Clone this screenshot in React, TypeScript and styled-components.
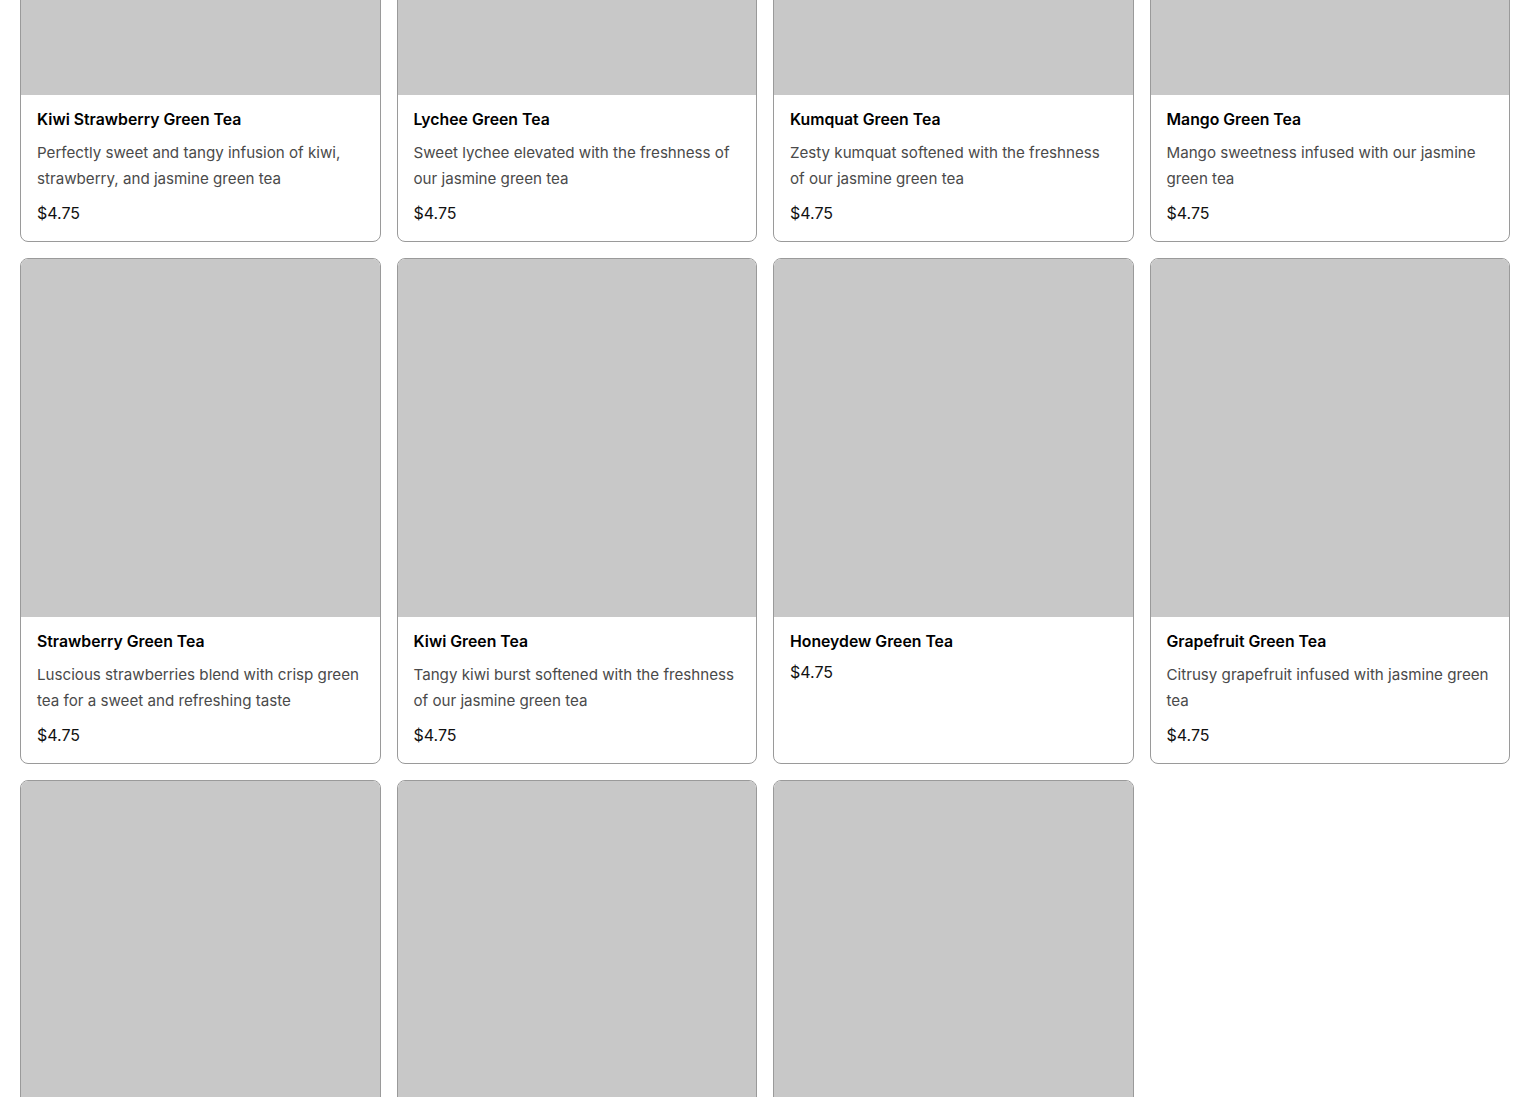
import React from "react";
import styled, { createGlobalStyle } from "styled-components";

const GlobalStyle = createGlobalStyle`
  html, body {
    margin: 0;
    padding: 0;
    background: #ffffff;
    font-family: Inter, "Noto Sans", "Liberation Sans", sans-serif;
  }
  * { box-sizing: border-box; }
`;

const Page = styled.main`
  padding: 0 20px 20px;
  margin-top: -265px;
`;

const Grid = styled.div`
  display: grid;
  grid-template-columns: repeat(4, 1fr);
  gap: 16px;
`;

const Card = styled.article`
  display: flex;
  flex-direction: column;
  border: 1px solid #9a9a9a;
  border-radius: 8px;
  overflow: hidden;
  background: #ffffff;
`;

const Thumb = styled.div`
  width: 100%;
  aspect-ratio: 1 / 1;
  background: #c8c8c8;
`;

const Body = styled.div`
  padding: 13px 16px 16px;
  display: flex;
  flex-direction: column;
`;

const Title = styled.h3`
  margin: 0 0 6px;
  font-size: 15.8px;
  line-height: 24px;
  font-weight: 600;
  color: #000000;
`;

const Description = styled.p`
  margin: 2px 0 9px;
  font-size: 15.15px;
  line-height: 26px;
  font-weight: 400;
  color: #4a4a4a;
`;

const Price = styled.span`
  font-size: 16px;
  line-height: 24px;
  color: #111111;
`;

type Item = { name: string; description?: string; price: string };

const items: Item[] = [
  {
    name: "Kiwi Strawberry Green Tea",
    description: "Perfectly sweet and tangy infusion of kiwi, strawberry, and jasmine green tea",
    price: "$4.75",
  },
  {
    name: "Lychee Green Tea",
    description: "Sweet lychee elevated with the freshness of our jasmine green tea",
    price: "$4.75",
  },
  {
    name: "Kumquat Green Tea",
    description: "Zesty kumquat softened with the freshness of our jasmine green tea",
    price: "$4.75",
  },
  {
    name: "Mango Green Tea",
    description: "Mango sweetness infused with our jasmine green tea",
    price: "$4.75",
  },
  {
    name: "Strawberry Green Tea",
    description: "Luscious strawberries blend with crisp green tea for a sweet and refreshing taste",
    price: "$4.75",
  },
  {
    name: "Kiwi Green Tea",
    description: "Tangy kiwi burst softened with the freshness of our jasmine green tea",
    price: "$4.75",
  },
  { name: "Honeydew Green Tea", price: "$4.75" },
  {
    name: "Grapefruit Green Tea",
    description: "Citrusy grapefruit infused with jasmine green tea",
    price: "$4.75",
  },
  {
    name: "Peach Green Tea",
    description: "Juicy peach paired with the freshness of our jasmine green tea",
    price: "$4.75",
  },
  {
    name: "Passion Fruit Green Tea",
    description: "Tropical passion fruit blended with our jasmine green tea",
    price: "$4.75",
  },
  {
    name: "Lemon Green Tea",
    description: "Bright lemon balanced with the freshness of our jasmine green tea",
    price: "$4.75",
  },
];

export default function App() {
  return (
    <>
      <GlobalStyle />
      <Page>
        <Grid>
          {items.map((item) => (
            <Card key={item.name}>
              <Thumb />
              <Body>
                <Title>{item.name}</Title>
                {item.description && <Description>{item.description}</Description>}
                <Price>{item.price}</Price>
              </Body>
            </Card>
          ))}
        </Grid>
      </Page>
    </>
  );
}
